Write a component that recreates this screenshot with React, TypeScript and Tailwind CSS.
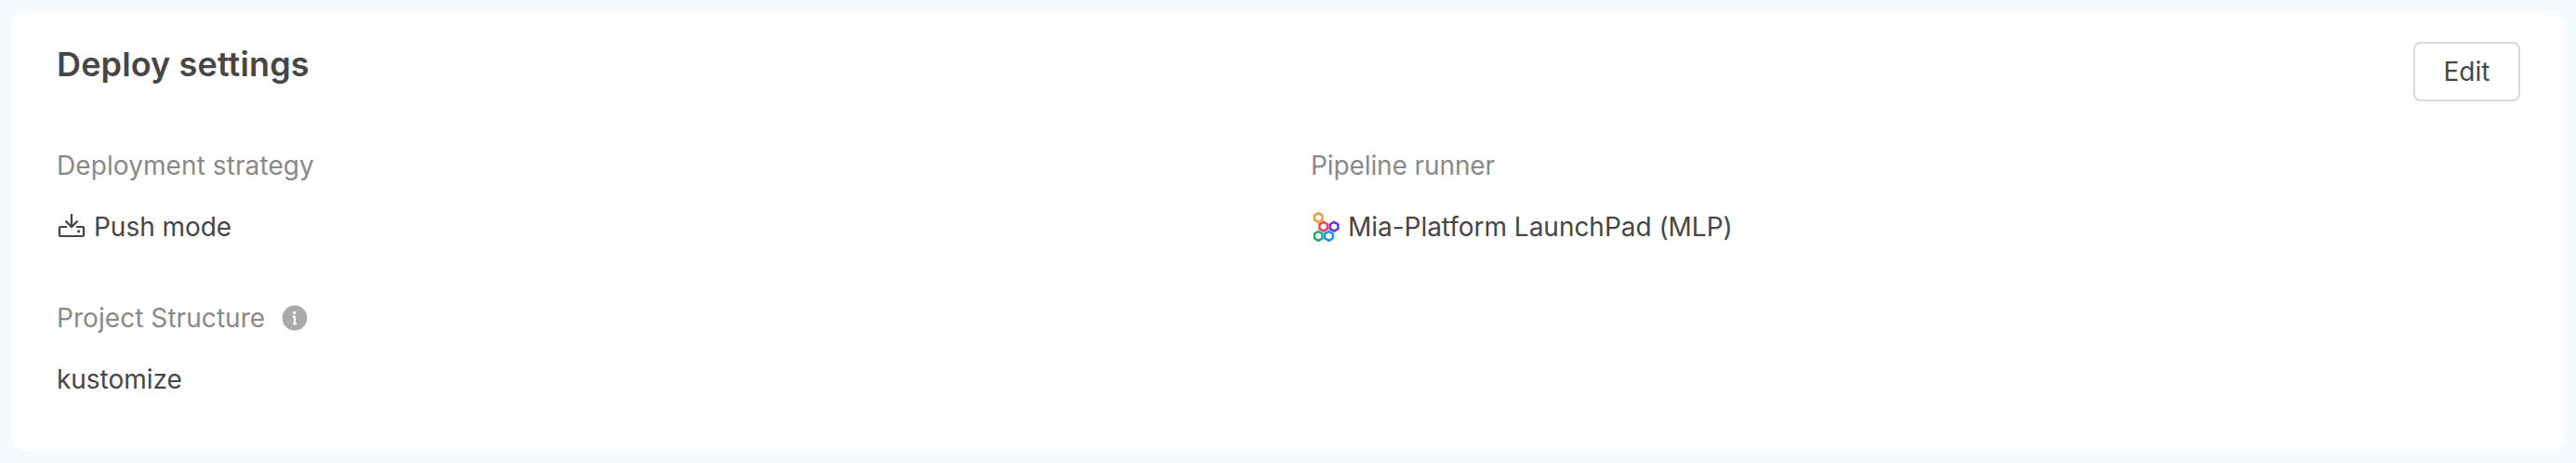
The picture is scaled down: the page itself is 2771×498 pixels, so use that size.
import type { ReactNode } from "react";

function PushIcon() {
  return (
    <svg width="32" height="32" viewBox="0 0 32 32" fill="none" stroke="#444444" strokeWidth="2.200" strokeLinejoin="round">
      <path d="M11 16H4Q3 16 3 17V25Q3 26 4 26H28Q29 26 29 25V17Q29 16 28 16H21" />
      <path d="M16 2V16M9.500 9.600L16 16.100L22.500 9.600" />
      <circle cx="23.600" cy="20.800" r="1.600" fill="#444444" stroke="none" />
    </svg>
  );
}

const hexagons = [
  { x: 8.2, y: 7, color: "#f79a3e" },
  { x: 13.7, y: 16.7, color: "#f5424b" },
  { x: 25.1, y: 16.7, color: "#6236d9" },
  { x: 8.2, y: 26.9, color: "#28a770" },
  { x: 19.4, y: 26.9, color: "#1e90ff" },
];

function MiaLogo() {
  return (
    <svg width="32" height="34" viewBox="0 0 32 34" fill="none">
      {hexagons.map(({ x, y, color }) => (
        <path
          key={color}
          transform={`translate(${x} ${y})`}
          d="M0 -4.900L4.250 -2.450V2.450L0 4.900L-4.250 2.450V-2.450Z"
          stroke={color}
          strokeWidth="2.500"
          strokeLinejoin="round"
        />
      ))}
    </svg>
  );
}

function InfoIcon() {
  return (
    <svg width="28" height="28" viewBox="0 0 28 28">
      <circle cx="14" cy="14" r="13.400" fill="#aaaaaa" />
      <circle cx="13.700" cy="8.400" r="1.700" fill="#ffffff" />
      <path d="M11.600 12.600H14V20.200M12.200 20.200H16" fill="none" stroke="#ffffff" strokeWidth="2" />
    </svg>
  );
}

function Field({ label, hint, icon, value }: { label: ReactNode; hint?: ReactNode; icon?: ReactNode; value: string }) {
  return (
    <div className="flex flex-col gap-[22px]">
      <div className="flex h-11 items-center gap-[18px] text-[#898989]">
        {label}
        {hint}
      </div>
      <div className="flex h-11 items-center gap-2 tracking-[-0.03px]">
        {icon}
        <span>{value}</span>
      </div>
    </div>
  );
}

export default function App() {
  return (
    <div className="h-[498px] bg-[#f4faff] pt-[13px] pr-3 pb-[13px] pl-[13px] font-['Inter',sans-serif] text-[28px] leading-[44px] text-[#464646]">
      <section className="h-full rounded-[16px] bg-white px-12 pt-8">
        <header className="flex items-start justify-between">
          <h2 className="text-[36px] leading-[48px] font-semibold tracking-[0.13px]">Deploy settings</h2>
          <button className="flex h-16 w-[115px] items-center justify-center rounded-[8px] border-2 border-[#d9d9d9] bg-white shadow-[0_4px_0_rgba(0,0,0,0.016)]">
            Edit
          </button>
        </header>
        <div className="mt-[47px] grid grid-cols-2 gap-x-12 gap-y-[54px]">
          <Field label={<span className="tracking-[0.09px]">Deployment strategy</span>} icon={<PushIcon />} value="Push mode" />
          <Field label={<span className="tracking-[-0.1px]">Pipeline runner</span>} icon={<MiaLogo />} value="Mia-Platform LaunchPad (MLP)" />
          <Field label={<span className="tracking-[0.06px]">Project Structure</span>} hint={<InfoIcon />} value="kustomize" />
        </div>
      </section>
    </div>
  );
}
